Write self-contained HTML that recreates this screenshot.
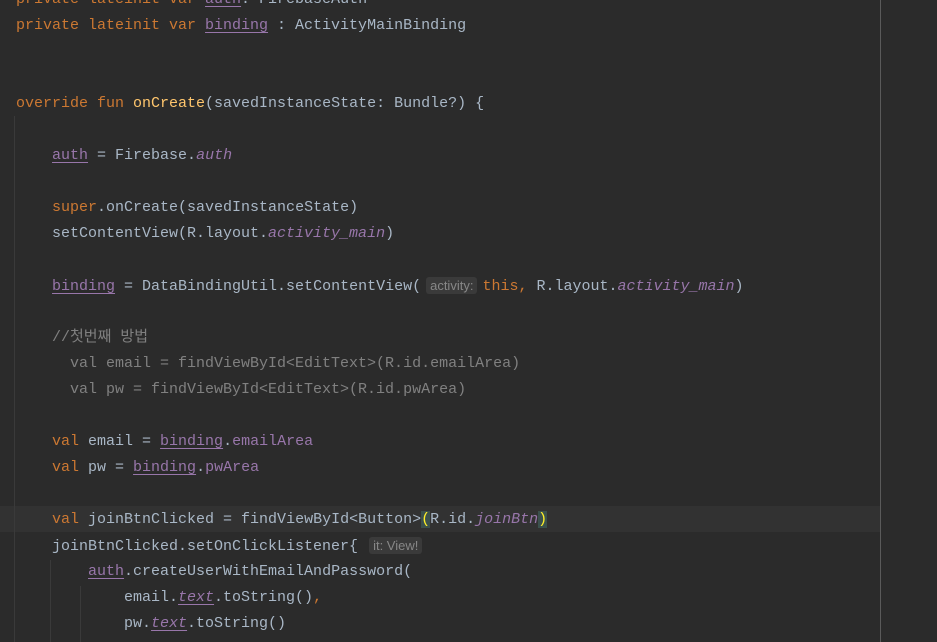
<!DOCTYPE html>
<html><head><style>
html,body{margin:0;padding:0;background:#2b2b2b;width:937px;height:642px;overflow:hidden;position:relative}
.code{position:absolute;left:16px;top:-13px;font-family:"Liberation Mono","Noto Sans CJK KR",monospace;font-size:15px;line-height:26px;color:#a9b7c6;white-space:pre}
.l{height:26px}
.k{color:#cc7832}.f{color:#ffc66d}.p{color:#9876aa}.pi{color:#9876aa;font-style:italic}.c{color:#808080}
.u{text-decoration:underline;text-underline-offset:3px}
.h{font-family:"Liberation Sans",sans-serif;font-size:13px;color:#878787;background:#3a3a3a;border-radius:3px;padding:1px 4px;margin:0 5px}
.h2{margin-left:11px}
.br{background:#3b514d;color:#ffef28}
.cur{position:absolute;left:0;top:506px;width:880px;height:26px;background:#323232}
.vl{position:absolute;left:880px;top:0;width:1px;height:642px;background:#5a5a5a}
.g{position:absolute;width:1px;background:#3a3a3a}
</style></head><body>
<div class="cur"></div>
<div class="vl"></div>
<div class="g" style="left:14px;top:116px;height:526px"></div>
<div class="g" style="left:50px;top:560px;height:82px"></div>
<div class="g" style="left:80px;top:586px;height:56px"></div>
<div class="code"><div class="l"><span class="k">private lateinit var </span><span class="p u">auth</span>: FirebaseAuth</div><div class="l"><span class="k">private lateinit var </span><span class="p u">binding</span> : ActivityMainBinding</div><div class="l"> </div><div class="l"> </div><div class="l"><span class="k">override fun </span><span class="f">onCreate</span>(savedInstanceState: Bundle?) {</div><div class="l"> </div><div class="l">    <span class="p u">auth</span> = Firebase.<span class="pi">auth</span></div><div class="l"> </div><div class="l">    <span class="k">super</span>.onCreate(savedInstanceState)</div><div class="l">    setContentView(R.layout.<span class="pi">activity_main</span>)</div><div class="l"> </div><div class="l">    <span class="p u">binding</span> = DataBindingUtil.setContentView(<span class="h">activity:</span><span class="k">this, </span>R.layout.<span class="pi">activity_main</span>)</div><div class="l"> </div><div class="l c">    //첫번째 방법</div><div class="l c">      val email = findViewById&lt;EditText&gt;(R.id.emailArea)</div><div class="l c">      val pw = findViewById&lt;EditText&gt;(R.id.pwArea)</div><div class="l"> </div><div class="l">    <span class="k">val </span>email = <span class="p u">binding</span>.<span class="p">emailArea</span></div><div class="l">    <span class="k">val </span>pw = <span class="p u">binding</span>.<span class="p">pwArea</span></div><div class="l"> </div><div class="l">    <span class="k">val </span>joinBtnClicked = findViewById&lt;Button&gt;<span class="br">(</span>R.id.<span class="pi">joinBtn</span><span class="br">)</span></div><div class="l">    joinBtnClicked.setOnClickListener{<span class="h h2">it: View!</span></div><div class="l">        <span class="p u">auth</span>.createUserWithEmailAndPassword(</div><div class="l">            email.<span class="pi u">text</span>.toString()<span class="k">,</span></div><div class="l">            pw.<span class="pi u">text</span>.toString()</div></div>
</body></html>
